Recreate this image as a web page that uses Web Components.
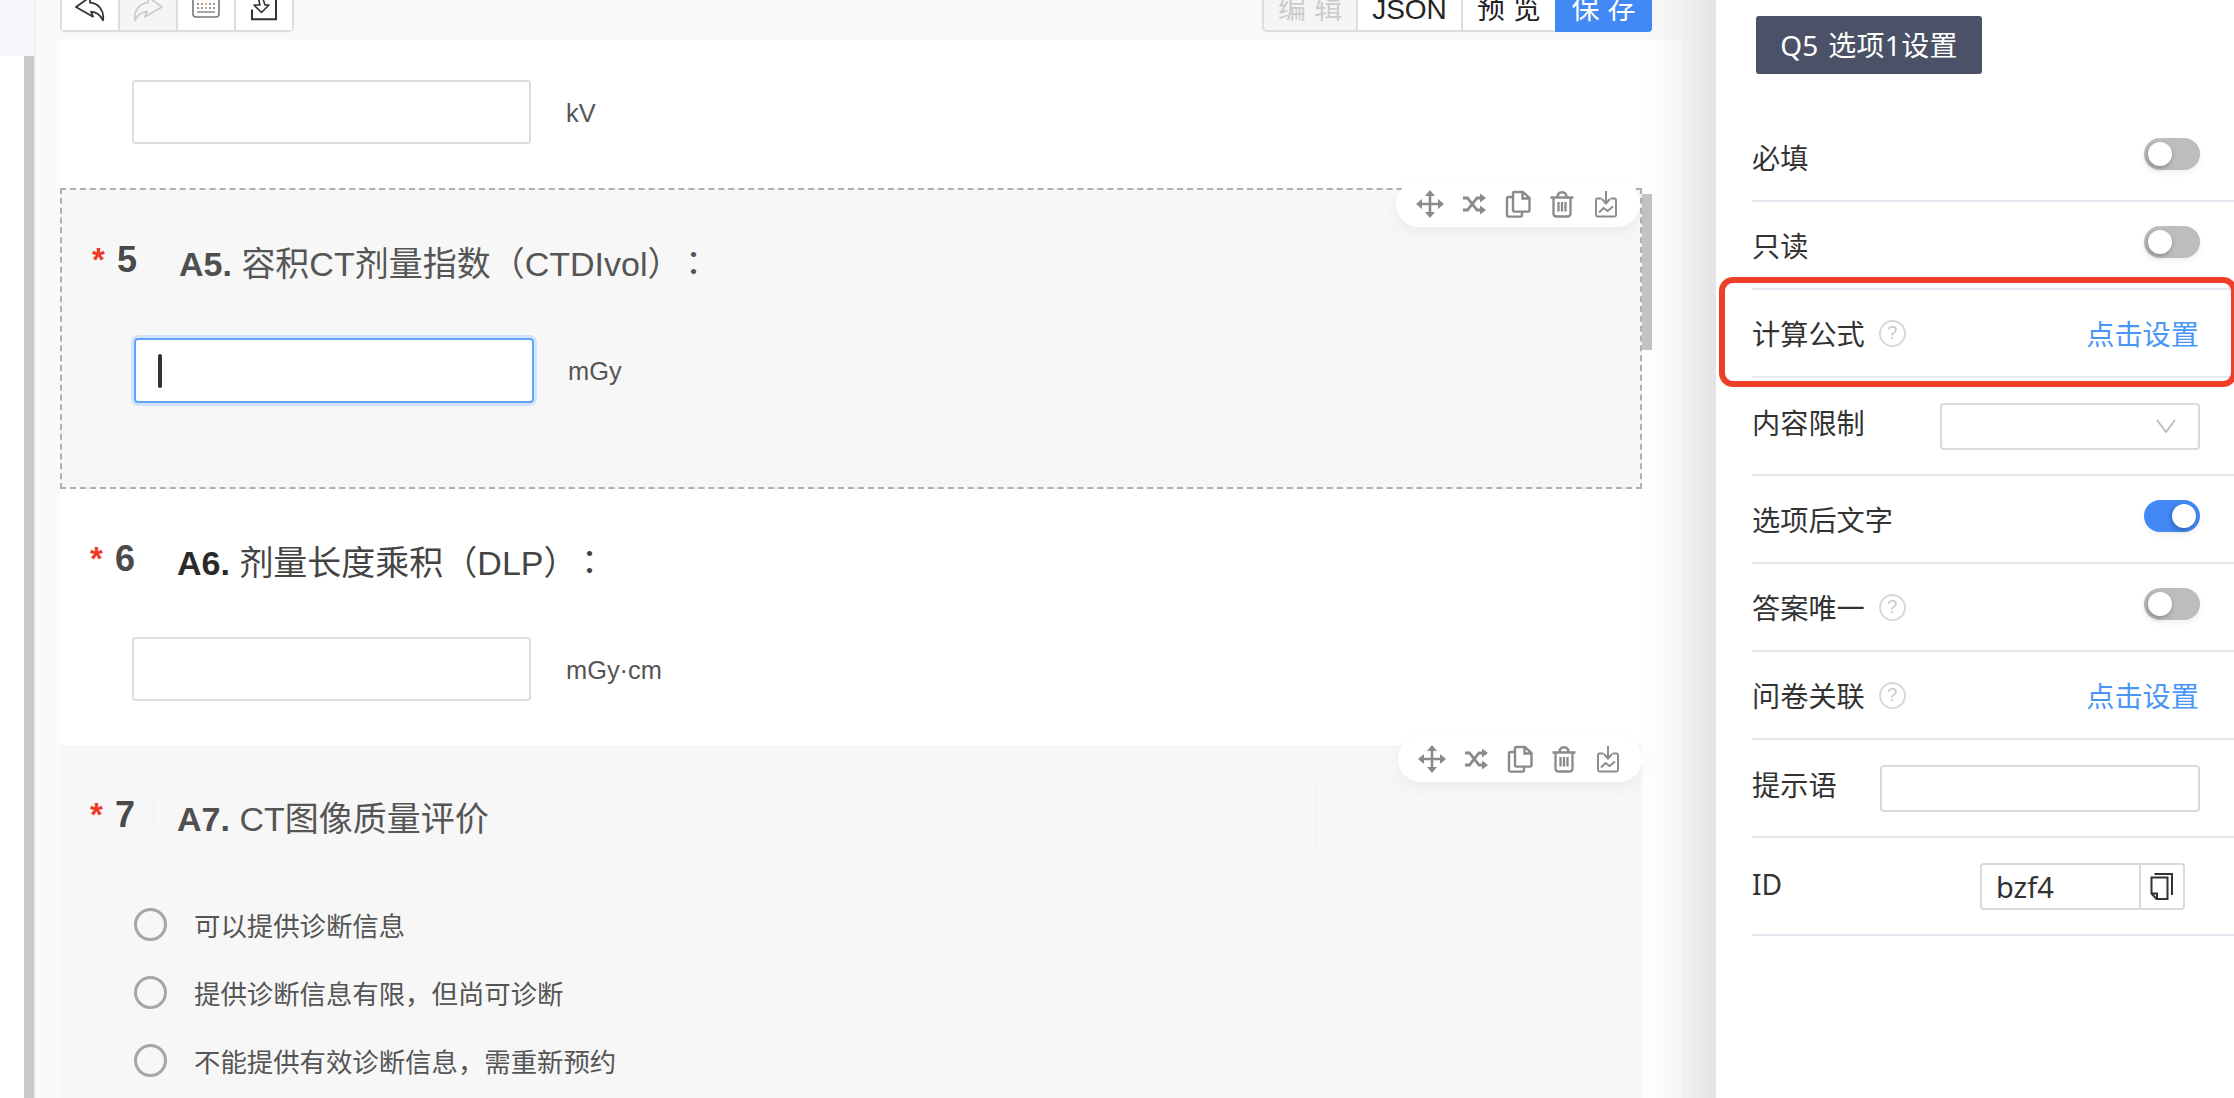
<!DOCTYPE html>
<html lang="zh">
<head>
<meta charset="utf-8">
<title>问卷编辑</title>
<style>
html,body{margin:0;padding:0;height:100%;background:#fff;overflow:hidden}
body{font-family:"Liberation Sans","Noto Sans CJK SC",sans-serif}
.colon{font-family:"Noto Sans CJK TC",sans-serif;line-height:0;margin-left:12px}
</style>
</head>
<body>
<app-shell>
  <side-rail></side-rail>
  <form-canvas>
    <div slot="tools-left" style="display:contents">
      <tool-btn><svg width="28" height="24" viewBox="0 0 28 24" style="overflow:visible;display:block"><path d="M0 7L14-3V2.7C23 3.5 28.500 11 27 20.300C24 14.500 20 12 15 11.700L17 16.700Z" fill="none" stroke="#333" stroke-width="1.800" stroke-linejoin="round"/></svg></tool-btn>
      <tool-btn disabled><svg width="28" height="24" viewBox="0 0 28 24" style="overflow:visible;display:block"><path d="M28 7L14-3V2.700C5 3.500-.5 11 1 20.300C4 14.500 8 12 13 11.700L11 16.700Z" fill="none" stroke="#ccc" stroke-width="1.800" stroke-linejoin="round"/></svg></tool-btn>
      <tool-btn><svg width="28" height="24" viewBox="0 0 28 24" style="overflow:visible;display:block"><rect x="1" y="-6" width="26" height="23" rx="3" fill="none" stroke="#777" stroke-width="1.600"/><path d="M5 4h2M9 4h2M17 4h2M21 4h2M5 8h2M9 8h2M17 8h2M21 8h2" stroke="#777" stroke-width="1.500"/><path d="M13 4h2M13 8h2" stroke="#ea8a55" stroke-width="1.500"/><path d="M5 12H23" stroke="#888" stroke-width="1.500"/></svg></tool-btn>
      <tool-btn><svg width="28" height="24" viewBox="0 0 28 24" style="overflow:visible;display:block"><path d="M2 9.500V19.200H26V-6" fill="none" stroke="#333" stroke-width="2"/><path d="M4 5L11.500 12.500L19 5H15L13 -1H8.500L10 5Z" fill="none" stroke="#333" stroke-width="1.600" stroke-linejoin="round"/></svg></tool-btn>
    </div>

    <field-tail>
      <text-field unit="kV"></text-field>
    </field-tail>

    <q-block num="5" code="A5." selected scrollthumb tools>
      <span slot="title">容积CT剂量指数（CTDIvol）<span class="colon" lang="zh-TW">：</span></span>
      <text-field unit="mGy" focused></text-field>
    </q-block>

    <q-block num="6" code="A6." strong style="--pb:44px">
      <span slot="title">剂量长度乘积（DLP）<span class="colon" lang="zh-TW">：</span></span>
      <text-field unit="mGy·cm"></text-field>
    </q-block>

    <q-block num="7" code="A7." tools shaded ghost style="--head:145px;--pb:20px">
      <span slot="title">CT图像质量评价</span>
      <radio-option>可以提供诊断信息</radio-option>
      <radio-option>提供诊断信息有限，但尚可诊断</radio-option>
      <radio-option>不能提供有效诊断信息，需重新预约</radio-option>
    </q-block>
  </form-canvas>

  <prop-panel>
    <prop-row label="必填"><toggle-switch></toggle-switch></prop-row>
    <prop-row label="只读"><toggle-switch></toggle-switch></prop-row>
    <prop-row label="计算公式" help><a-link>点击设置</a-link></prop-row>
    <prop-row label="内容限制" raised="8"><select-box></select-box></prop-row>
    <prop-row label="选项后文字"><toggle-switch on></toggle-switch></prop-row>
    <prop-row label="答案唯一" help><toggle-switch></toggle-switch></prop-row>
    <prop-row label="问卷关联" help><a-link>点击设置</a-link></prop-row>
    <prop-row label="提示语" tall raised="8"><plain-input></plain-input></prop-row>
    <prop-row label="ID" tall raised="6"><id-input>bzf4</id-input></prop-row>
  </prop-panel>
</app-shell>

<script>
function def(name, css, html, init){
  customElements.define(name, class extends HTMLElement{
    constructor(){
      super();
      const root = this.attachShadow({mode:'open'});
      const h = typeof html === 'function' ? html(this) : html;
      root.innerHTML = '<style>'+css+'</style>'+h;
    }
    connectedCallback(){
      const root = this.shadowRoot;
      if(init && !this._done){ this._done = true; init(this, root); }
    }
  });
}

def('app-shell',
  ':host{display:flex;width:2234px;height:1098px;overflow:hidden;position:relative;background:#fff}',
  '<slot></slot>');

def('side-rail',
  ':host{display:flex;flex-direction:column;flex:none;width:36px;height:1098px;box-sizing:border-box;border-right:2px solid #efefef;background:#fff}'+
  '.top{height:56px;background:#f5f7fa}'+
  '.low{flex:1;display:flex}.w{width:24px;background:#fff}.bar{width:10px;background:#c9c9c9}',
  '<div class="top"></div><div class="low"><div class="w"></div><div class="bar"></div></div>');

def('form-canvas',
  ':host{display:block;flex:none;width:1680px;height:1098px;overflow:hidden;background:#fafafa;box-sizing:border-box;padding-left:24px}'+
  '.bar{display:flex;justify-content:space-between;height:32px;margin-bottom:8px;width:1592px}'+
  '.left{display:flex;box-sizing:border-box;height:32px;border:2px solid #ddd;border-top:0;border-radius:0 0 5px 5px;background:#fff;overflow:visible;box-shadow:0 2px 3px rgba(0,0,0,.02)}'+
  '.right{display:flex;height:32px}'+
  '.seg{box-sizing:border-box;height:32px;font-size:28px;line-height:19px;color:#222;background:#fff;border-bottom:2px solid #ddd;border-left:2px solid #ddd;display:flex;justify-content:center;white-space:nowrap}'+
  '.seg.dis{background:#f5f5f5;color:#ccc;border-radius:0 0 0 5px;width:94px}'+
  '.seg.json{width:105px}.seg.pre{width:94px}'+
  '.seg.save{width:97px;background:#4289f5;color:#fff;border:0;border-radius:0 0 4px 0}'+
  '.sp{letter-spacing:8px;padding-left:8px}'+
  '.card{width:1622px;background:#fff;box-sizing:border-box;padding-right:40px;height:1058px}',
  '<div class="bar"><div class="left"><slot name="tools-left"></slot></div>'+
  '<div class="right"><div class="seg dis sp">编辑</div><div class="seg json">JSON</div><div class="seg pre sp">预览</div><div class="seg save sp">保存</div></div></div>'+
  '<div class="card"><slot></slot></div>');

def('tool-btn',
  ':host{display:flex;justify-content:center;box-sizing:border-box;width:58px;height:30px;background:#fff;border-left:2px solid #ddd}'+
  ':host(:first-child){width:56px;border-left:0}'+
  ':host([disabled]){background:#f5f5f5}',
  '<slot></slot>');

def('field-tail',
  ':host{display:block;height:148px;box-sizing:border-box;padding:40px 0 0 72px}',
  '<slot></slot>');

const arrowIcons = [
 '<path d="M14 4V24M4 14H24" stroke-width="2.600" fill="none"/><path d="M14 0L19 6H9ZM14 28L9 22H19ZM0 14L6 9V19ZM28 14L22 19V9Z" stroke="none" fill="currentColor"/>',
 '<path d="M3 8H7.500L17 20H21.500M3 20H7.500L17 8H21.500" stroke-width="2.800" fill="none"/><path d="M20 3.500L26 8L20 12.500ZM20 15.500L26 20L20 24.500Z" stroke="none" fill="currentColor"/>',
 '<path d="M9 3.200C9 2.500 9.500 2 10.200 2H19L25.500 8V20C25.500 21 25 21.600 24 21.600H10.500C9.500 21.600 9 21 9 20ZM18.500 2.500V8.500H25" stroke-width="2.400" fill="none"/><path d="M9 7H4.500C3.500 7 3 7.600 3 8.500V25C3 26 3.500 26.600 4.500 26.600H16.500C17.500 26.600 18 26 18 25V21.600" stroke-width="2.400" fill="none"/>',
 '<path d="M2.500 7.500H25.500M9.500 7.500C9.500 4 11 2.200 14 2.200S18.500 4 18.500 7.500" stroke-width="2.400" fill="none"/><path d="M5.500 7.500V23.500C5.500 25.500 6.500 26.500 8.500 26.500H19.500C21.500 26.500 22.500 25.500 22.500 23.500V7.500M10.500 12V21.500M14 12V21.500M17.500 12V21.500" stroke-width="2.300" fill="none"/>',
 '<path d="M9.500 8.500H5.500C4.500 8.500 4 9 4 10V25C4 26 4.500 26.500 5.500 26.500H22.500C23.500 26.500 24 26 24 25V10C24 9 23.500 8.500 22.500 8.500H18.500" stroke-width="1.900" fill="none"/><path d="M14 1V13M10 9L14 13.500L18 9" stroke-width="1.900" fill="none"/><path d="M7 22.500L11.500 18L15.500 21L21 16.500" stroke-width="1.900" fill="none"/>'
];

def('float-tools',
  ':host{position:absolute;top:-9px;right:0;z-index:3;display:flex;align-items:center;justify-content:space-between;box-sizing:border-box;width:244px;height:46px;padding:0 20px;background:#fff;border-radius:23px;box-shadow:0 6px 14px rgba(60,70,90,.06);color:#8a8a8a}'+
  'svg{display:block;stroke:currentColor;width:28px;height:28px}',
  arrowIcons.map(p=>'<svg viewBox="0 0 28 28">'+p+'</svg>').join(''));

def('q-block',
  ':host{display:block;position:relative;box-sizing:border-box;padding-bottom:var(--pb,84px)}'+
  ':host([selected]){background:#f7f7f7;border:2px dashed #b0b0b0}'+
  ':host([shaded]){background:#f7f7f7}'+
  '.head{display:flex;position:relative;height:var(--head,148px);box-sizing:border-box;padding-left:30px}'+
  '.star{flex:none;width:25px;margin-top:52px;font-size:33px;line-height:36px;color:#f03a2a;font-weight:700}'+
  '.num{flex:none;width:62px;margin-top:50px;font-size:36px;line-height:40px;font-weight:700;color:#4a4a4a}'+
  '.title{margin-top:54px;font-size:34px;line-height:40px;color:#555;white-space:nowrap}'+
  '.title b{color:#4f4f4f;font-weight:700}'+
  ':host([strong]) .title{color:#444}:host([strong]) .title b{color:#2a2a2a}'+
  '.body{padding-left:72px}'+
  '.ghost{position:absolute;left:92px;top:36px;width:1165px;height:71px;box-sizing:border-box;border:2px dashed #f2f3f6}'+
  '.thumb{position:absolute;left:100%;top:4px;width:10px;height:156px;background:#c4c4c4;margin-left:2px}',
  el=>'<div class="head">'+
    (el.hasAttribute('ghost')?'<div class="ghost"></div>':'')+
    '<div class="star">*</div><div class="num">'+el.getAttribute('num')+'</div>'+
    '<div class="title"><b>'+el.getAttribute('code')+'</b> <slot name="title"></slot></div></div>'+
    '<div class="body"><slot></slot></div>'+
    (el.hasAttribute('tools')?'<float-tools></float-tools>':'')+
    (el.hasAttribute('scrollthumb')?'<div class="thumb"></div>':''));

def('text-field',
  ':host{display:flex;align-items:center}'+
  '.box{flex:none;box-sizing:border-box;width:399px;height:64px;background:#fff;border:2px solid #ddd;border-radius:4px;display:flex;align-items:center;padding-left:22px}'+
  ':host([focused]) .box{border-color:#5fa4f8;box-shadow:0 0 0 3px #d2e4fb;width:400px;height:65px}'+
  ':host([focused]) .unit{margin-left:34px}'+
  '.caret{width:4px;height:34px;background:#333;border-radius:2px}'+
  '.unit{margin-left:35px;margin-top:1px;font-size:25.400px;line-height:32px;color:#555;white-space:nowrap}',
  el=>'<div class="box">'+(el.hasAttribute('focused')?'<div class="caret"></div>':'')+'</div><div class="unit">'+el.getAttribute('unit')+'</div>');

def('radio-option',
  ':host{display:flex;align-items:center;height:68px;font-size:26.400px;color:#555;white-space:nowrap;padding-left:2px}'+
  '.dot{flex:none;box-sizing:border-box;width:33px;height:33px;border:3px solid #a6a6a6;border-radius:50%;margin-right:27px}',
  '<div class="dot"></div><slot></slot>');

def('prop-panel',
  ':host{display:block;position:relative;z-index:2;flex:none;width:518px;height:1098px;background:#fff;box-sizing:border-box;padding:16px 0 0 36px;font-family:"Noto Sans","Noto Sans CJK SC",sans-serif}'+
  '.shade{position:absolute;left:-76px;top:0;width:76px;height:100%;pointer-events:none;background:linear-gradient(to right,rgba(0,0,0,0) 0,rgba(0,0,0,.035) 55%,rgba(0,0,0,.09) 100%)}'+
  '.tag{box-sizing:border-box;margin-left:4px;margin-bottom:40px;width:226px;height:58px;background:#4b5166;border-radius:3px;color:#fff;font-size:28px;letter-spacing:.3px;word-spacing:2px;line-height:58px;text-align:center;white-space:nowrap}'+
  '.mark{position:absolute;left:3px;top:277px;width:518px;height:110px;box-sizing:border-box;border:6px solid #ee4027;border-radius:14px;pointer-events:none}',
  '<div class="shade"></div><div class="tag">Q5 选项1设置</div><slot></slot><div class="mark"></div>');

def('prop-row',
  ':host{display:flex;align-items:center;justify-content:space-between;box-sizing:border-box;height:88px;border-bottom:2px solid #e4e8f0;padding-right:34px}'+
  ':host([tall]),:host(:nth-of-type(4)){height:98px}'+
  '.lab{display:flex;align-items:center;margin-top:1px;font-size:28.200px;line-height:40px;color:#333;white-space:nowrap}'+
  '.q{box-sizing:border-box;width:27px;height:27px;border:2px solid #d8d8d8;border-radius:50%;margin-left:14px;font-size:18px;line-height:23px;text-align:center;color:#c8c8c8;font-family:"Liberation Sans",sans-serif}',
  el=>{
    const r = el.getAttribute('raised');
    return '<div class="lab"'+(r?' style="margin-bottom:'+r+'px"':'')+'>'+el.getAttribute('label')+(el.hasAttribute('help')?'<span class="q">?</span>':'')+'</div><slot></slot>';
  });

def('toggle-switch',
  ':host{display:flex;box-sizing:border-box;width:56px;height:32px;margin-bottom:6px;padding:4px;border-radius:16px;background:#bdbdbd;box-shadow:0 3px 6px rgba(0,0,0,.06)}'+
  ':host([on]){background:#4289f5;justify-content:flex-end}'+
  'i{display:block;width:24px;height:24px;border-radius:50%;background:#fff;box-shadow:-1px 2px 5px rgba(0,0,0,.3)}',
  '<i></i>');

def('a-link',':host{display:block;margin-top:1px;font-size:28.200px;line-height:40px;color:#4a96f7;margin-right:1px;white-space:nowrap}','<slot></slot>');

def('select-box',
  ':host{display:flex;align-items:center;justify-content:flex-end;box-sizing:border-box;width:260px;height:47px;border:2px solid #d9d9d9;border-radius:4px;background:#fff;padding-right:22px}'+
  'svg{display:block}',
  '<svg width="20" height="14" viewBox="0 0 20 14"><path d="M1 1L10 13L19 1" fill="none" stroke="#bbb" stroke-width="1.800"/></svg>');

def('plain-input',
  ':host{display:block;box-sizing:border-box;width:320px;height:47px;border:2px solid #d9d9d9;border-radius:4px;background:#fff}','');

def('id-input',
  ':host{display:flex;box-sizing:border-box;width:205px;height:47px;margin-right:15px;border:2px solid #d9d9d9;border-radius:4px;background:#fff}'+
  '.v{box-sizing:border-box;width:157px;padding-left:14px;font-size:29px;line-height:43px;color:#333}'+
  '.b{flex:1;border-left:2px solid #d9d9d9;display:flex;align-items:center;justify-content:center}'+
  'svg{display:block}',
  '<div class="v"><slot></slot></div><div class="b"><svg width="24" height="28" viewBox="0 0 24 28"><path d="M1.500 5.500H17.500V27H6.500L1.500 21.500ZM1.500 21.500H7V27M4.500 2H22V23" fill="none" stroke="#333" stroke-width="2"/></svg></div>');
</script>
</body>
</html>
